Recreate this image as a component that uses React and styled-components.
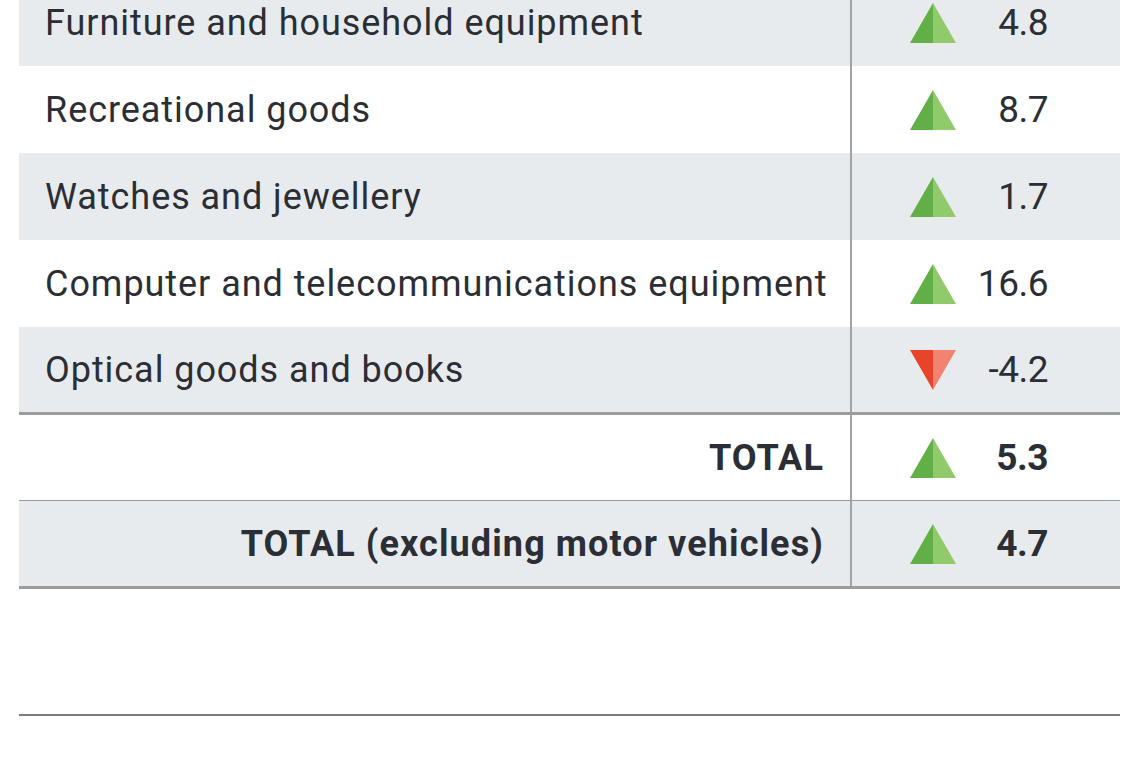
import React from 'react';
import styled, { createGlobalStyle } from 'styled-components';

const Global = createGlobalStyle`
  html, body {
    margin: 0;
    padding: 0;
    background: #fff;
    overflow: hidden;
  }
  body {
    font-family: Roboto, "Noto Sans", "Liberation Sans", sans-serif;
    color: #2b2e34;
  }
`;

const Page = styled.div`
  width: 1140px;
  height: 760px;
  overflow: hidden;
`;

const Table = styled.div`
  margin: -21px 20px 0 19px;
`;

const Row = styled.div`
  display: grid;
  grid-template-columns: 831px 1fr;
  height: ${p => p.$height || 87}px;
  background: ${p => (p.$shade ? '#e8ebee' : '#fff')};
  border-bottom: ${p => (p.$rule ? `${p.$rule}px solid #9c9c9c` : 'none')};
`;

const Label = styled.div`
  display: flex;
  align-items: center;
  justify-content: ${p => (p.$total ? 'flex-end' : 'flex-start')};
  padding: 0 ${p => (p.$total ? 26 : 28)}px 0 26px;
  font-size: 36px;
  font-weight: ${p => (p.$total ? 700 : 400)};
  letter-spacing: ${p => (p.$total ? '1.1px' : '0.95px')};
  white-space: nowrap;
`;

const Value = styled.div`
  display: flex;
  align-items: center;
  padding: 0 72px 0 58px;
  border-left: 2px solid #a3a3a3;
`;

const Num = styled.span`
  margin-left: auto;
  font-size: 37px;
  letter-spacing: -0.5px;
  font-weight: ${p => (p.$bold ? 700 : 400)};
`;

const Rule = styled.div`
  margin: 125px 20px 0 19px;
  height: 2px;
  background: #7c7c7c;
`;

const Arrow = ({ down }) =>
  down ? (
    <svg width="46" height="40" viewBox="0 0 46 40">
      <polygon points="0,0 23,0 23,40" fill="#e8432b" />
      <polygon points="23,0 46,0 23,40" fill="#f2836f" />
    </svg>
  ) : (
    <svg width="46" height="40" viewBox="0 0 46 40">
      <polygon points="23,0 0,40 23,40" fill="#62af48" />
      <polygon points="23,0 46,40 23,40" fill="#90ca6b" />
    </svg>
  );

const rows = [
  { label: 'Furniture and household equipment', value: '4.8', shade: true },
  { label: 'Recreational goods', value: '8.7' },
  { label: 'Watches and jewellery', value: '1.7', shade: true },
  { label: 'Computer and telecommunications equipment', value: '16.6' },
  { label: 'Optical goods and books', value: '-4.2', down: true, shade: true, height: 85, rule: 3 },
  { label: 'TOTAL', value: '5.3', total: true, height: 85, rule: 1 },
  { label: 'TOTAL (excluding motor vehicles)', value: '4.7', total: true, shade: true, height: 85, rule: 3 },
];

export default function App() {
  return (
    <Page>
      <Global />
      <Table>
        {rows.map(r => (
          <Row key={r.label} $shade={r.shade} $height={r.height} $rule={r.rule}>
            <Label $total={r.total}>{r.label}</Label>
            <Value>
              <Arrow down={r.down} />
              <Num $bold={r.total}>{r.value}</Num>
            </Value>
          </Row>
        ))}
      </Table>
      <Rule />
    </Page>
  );
}
